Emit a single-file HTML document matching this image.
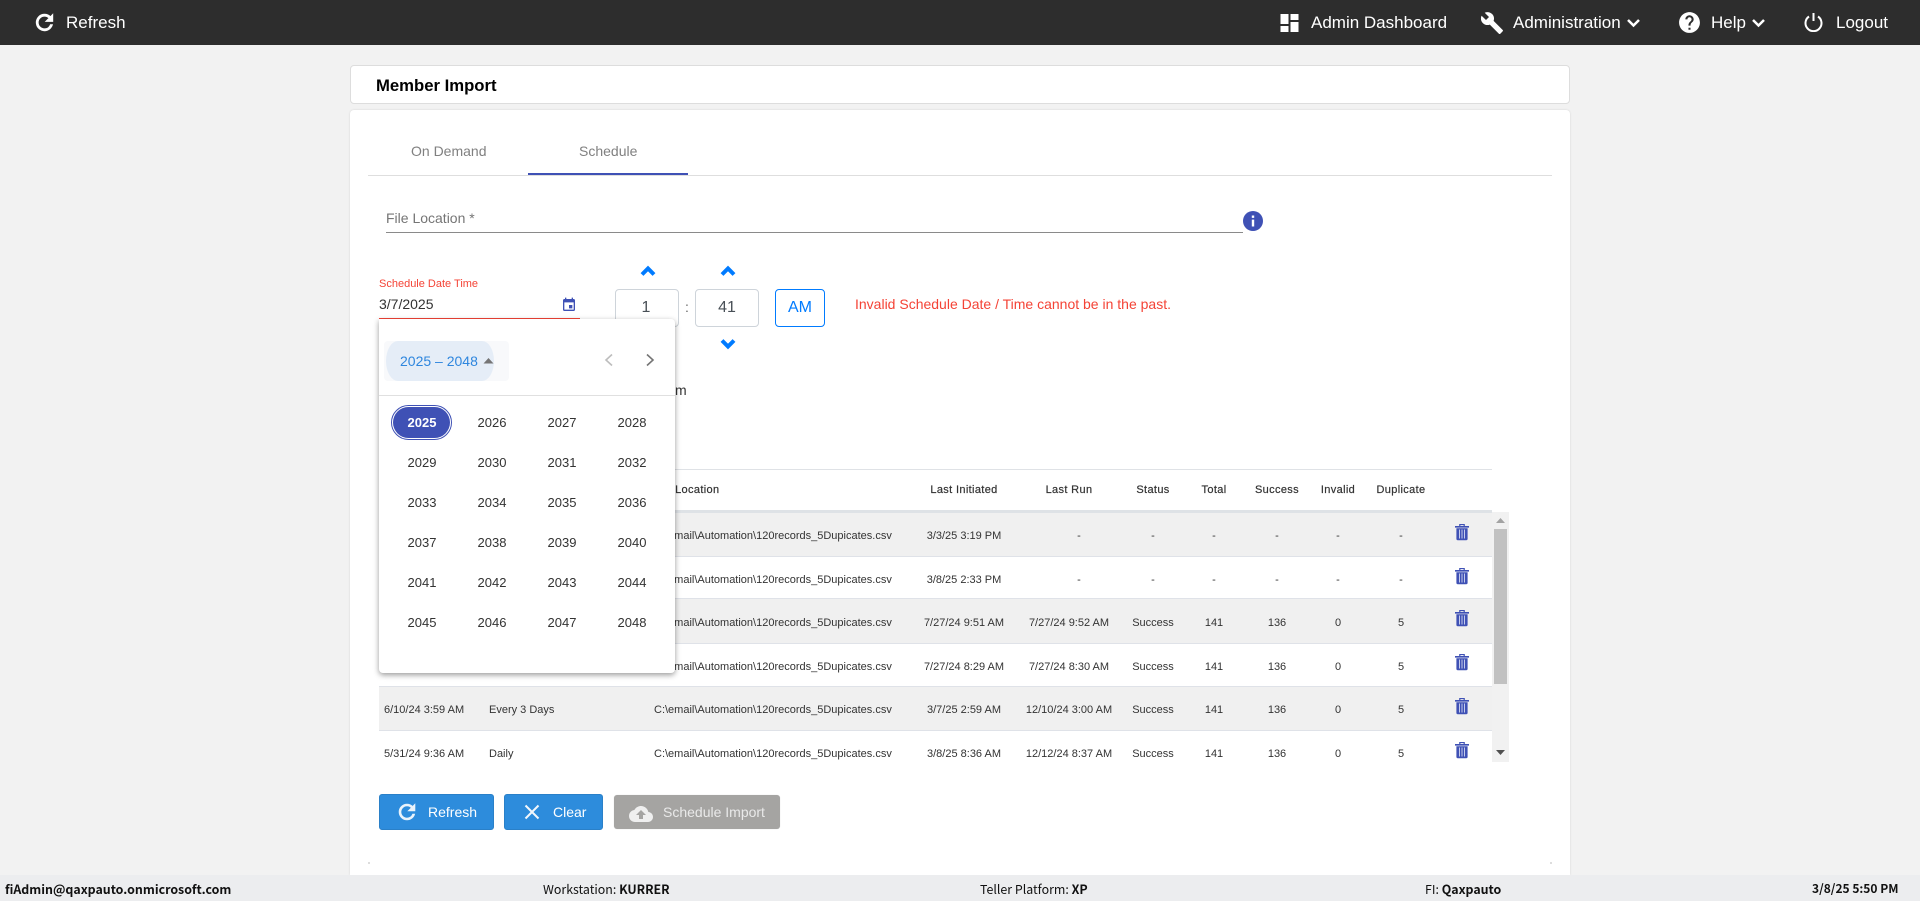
<!DOCTYPE html>
<html>
<head>
<meta charset="utf-8">
<title>Member Import</title>
<style>
html,body{margin:0;padding:0;width:1920px;height:901px;overflow:hidden;background:#f2f2f2;font-family:"Liberation Sans",Arial,sans-serif;color:#333}
div,span,svg{position:absolute;display:block;box-sizing:border-box}
b,i{position:static;display:inline}
.nav{color:#fff;font-size:17px;line-height:20px;top:13px;white-space:nowrap}
.bg{left:379px;width:1113px;background:#f0f0f0}
.ln{left:379px;width:1113px;height:1px;background:#dfe2e8}
.c{font-size:11px;line-height:16px;height:16px;white-space:nowrap;color:#333;transform:translateX(-50%)}
.l{font-size:11px;line-height:16px;height:16px;white-space:nowrap;color:#333}
.h{top:482px;font-size:11px;line-height:16px;height:16px;white-space:nowrap;color:#333;letter-spacing:.35px;-webkit-text-stroke:.2px #333;transform:translateX(-50%)}
.y{font-size:13px;line-height:16px;height:16px;width:60px;text-align:center;color:#333}
.tr{width:16px;height:18px}
.btn{border-radius:3px;color:#fff;font-size:14px;line-height:36px;white-space:nowrap}
.foot{top:880px;font-family:"Noto Sans CJK JP","Liberation Sans",sans-serif;font-size:12.4px;line-height:18px;color:#111;white-space:nowrap}
</style>
</head>
<body>
<div style="left:0;top:0;width:1920px;height:45px;background:#2d2d2d"></div>

<svg style="left:32px;top:10px" width="25" height="25" viewBox="0 0 24 24"><path fill="#fff" stroke="#fff" stroke-width=".7" d="M17.65 6.35C16.2 4.9 14.21 4 12 4c-4.42 0-7.99 3.58-7.99 8s3.57 8 7.99 8c3.73 0 6.84-2.55 7.73-6h-2.08c-.82 2.33-3.04 4-5.65 4-3.31 0-6-2.69-6-6s2.69-6 6-6c1.66 0 3.14.69 4.22 1.78L13 11h7V4l-2.35 2.35z"/></svg>
<div class="nav" style="left:66px">Refresh</div>

<svg style="left:1277px;top:11px" width="25" height="24" viewBox="0 0 24 24"><path fill="#fff" d="M3 13h8V3H3v10zm0 8h8v-6H3v6zm10 0h8V11h-8v10zm0-18v6h8V3h-8z"/></svg>
<div class="nav" style="left:1311px">Admin Dashboard</div>
<svg style="left:1480px;top:11px" width="24" height="24" viewBox="0 0 24 24"><path fill="#fff" d="M22.7 19l-9.1-9.1c.9-2.3.4-5-1.5-6.9-2-2-5-2.4-7.4-1.3L9 6 6 9 1.6 4.7C.4 7.1.9 10.1 2.9 12.1c1.9 1.9 4.6 2.4 6.9 1.5l9.1 9.1c.4.4 1 .4 1.4 0l2.3-2.3c.5-.4.5-1.1.1-1.4z"/></svg>
<div class="nav" style="left:1513px">Administration</div>
<svg style="left:1627px;top:18px" width="13" height="10" viewBox="0 0 13 10"><path fill="none" stroke="#fff" stroke-width="2.5" d="M1 2l5.5 5.5L12 2"/></svg>
<svg style="left:1677px;top:10px" width="25" height="25" viewBox="0 0 24 24"><path fill="#fff" d="M12 2C6.48 2 2 6.48 2 12s4.48 10 10 10 10-4.48 10-10S17.52 2 12 2zm1 17h-2v-2h2v2zm2.07-7.75l-.9.92C13.45 12.9 13 13.5 13 15h-2v-.5c0-1.1.45-2.1 1.17-2.83l1.24-1.26c.37-.36.59-.86.59-1.41 0-1.1-.9-2-2-2s-2 .9-2 2H8c0-2.21 1.79-4 4-4s4 1.79 4 4c0 .88-.36 1.68-.93 2.25z"/></svg>
<div class="nav" style="left:1711px">Help</div>
<svg style="left:1752px;top:18px" width="13" height="10" viewBox="0 0 13 10"><path fill="none" stroke="#fff" stroke-width="2.5" d="M1 2l5.5 5.5L12 2"/></svg>
<svg style="left:1803px;top:12px" width="21" height="20" viewBox="0 0 21 20"><path fill="none" stroke="#fff" stroke-width="2" d="M6 4.5A8 8 0 1 0 15 4.5M10.5 1v8"/></svg>
<div class="nav" style="left:1836px">Logout</div>

<div style="left:350px;top:65px;width:1220px;height:39px;background:#fff;border:1px solid #ddd;border-radius:4px"></div>
<div style="left:376px;top:76px;font-size:16.7px;line-height:20px;font-weight:bold;color:#000;white-space:nowrap">Member Import</div>

<div style="left:350px;top:110px;width:1220px;height:765px;background:#fff;border-radius:4px 4px 0 0;box-shadow:0 0 2px rgba(0,0,0,.12)"></div>
<div style="left:368px;top:862px;width:2px;height:2px;background:#ddd"></div>
<div style="left:1550px;top:862px;width:2px;height:2px;background:#ddd"></div>

<div style="left:368px;top:175px;width:1184px;height:1px;background:#dedede"></div>
<div style="left:528px;top:173px;width:160px;height:2px;background:#3f51b5"></div>
<div style="left:411px;top:143px;font-size:14px;line-height:16px;color:#808080;white-space:nowrap">On Demand</div>
<div style="left:579px;top:143px;font-size:14px;line-height:16px;color:#808080;white-space:nowrap">Schedule</div>

<div style="left:386px;top:210px;font-size:14px;line-height:16px;color:#757575;white-space:nowrap">File Location *</div>
<div style="left:386px;top:232px;width:857px;height:1px;background:#8a8a8a"></div>
<svg style="left:1243px;top:211px" width="20" height="20" viewBox="0 0 20 20"><circle cx="10" cy="10" r="10" fill="#3f51b5"/><path fill="#fff" d="M8.8 4.5h2.4v2.4H8.8zM8.8 8.6h2.4v6.9H8.8z"/></svg>

<div style="left:379px;top:277px;font-size:11px;line-height:14px;color:#f44336;white-space:nowrap">Schedule Date Time</div>
<div style="left:379px;top:296px;font-size:14px;line-height:16px;color:#333;white-space:nowrap">3/7/2025</div>
<svg style="left:561px;top:297px" width="16" height="16" viewBox="0 0 24 24"><path fill="#3f51b5" d="M17 12h-5v5h5v-5zM16 1v2H8V1H6v2H5c-1.11 0-1.99.9-1.99 2L3 19c0 1.1.89 2 2 2h14c1.1 0 2-.9 2-2V5c0-1.1-.9-2-2-2h-1V1h-2zm3 18H5V8h14v11z"/></svg>
<div style="left:379px;top:318px;width:201px;height:1px;background:#f44336"></div>

<svg style="left:640px;top:265px" width="16" height="12" viewBox="0 0 16 12"><path fill="none" stroke="#007bff" stroke-width="4" d="M2 9.5L8 3.5l6 6"/></svg>
<svg style="left:720px;top:265px" width="16" height="12" viewBox="0 0 16 12"><path fill="none" stroke="#007bff" stroke-width="4" d="M2 9.5L8 3.5l6 6"/></svg>
<svg style="left:720px;top:338px" width="16" height="12" viewBox="0 0 16 12"><path fill="none" stroke="#007bff" stroke-width="4" d="M2 2.5l6 6 6-6"/></svg>
<div style="left:615px;top:289px;width:64px;height:38px;border:1px solid #ced4da;border-radius:4px;padding-right:2px;text-align:center;font-size:16px;line-height:36px;color:#495057">1</div>
<div style="left:685px;top:298px;font-size:14px;line-height:18px;color:#666">:</div>
<div style="left:695px;top:289px;width:64px;height:38px;border:1px solid #ced4da;border-radius:4px;text-align:center;font-size:16px;line-height:36px;color:#495057">41</div>
<div style="left:775px;top:289px;width:50px;height:38px;border:1px solid #007bff;border-radius:4px;text-align:center;font-size:16px;line-height:36px;color:#007bff">AM</div>
<div style="left:855px;top:296px;font-size:14px;line-height:16px;color:#f44336;white-space:nowrap">Invalid Schedule Date / Time cannot be in the past.</div>

<div style="left:675px;top:381px;font-size:14px;line-height:18px;color:#333;white-space:nowrap">m</div>

<div style="left:379px;top:469px;width:1113px;height:1px;background:#dfe2e6"></div>
<div class="h" style="left:686px">File Location</div>
<div class="h" style="left:964px">Last Initiated</div>
<div class="h" style="left:1069px">Last Run</div>
<div class="h" style="left:1153px">Status</div>
<div class="h" style="left:1214px">Total</div>
<div class="h" style="left:1277px">Success</div>
<div class="h" style="left:1338px">Invalid</div>
<div class="h" style="left:1401px">Duplicate</div>
<div style="left:379px;top:510px;width:1113px;height:3px;background:#dee2e6"></div>

<div class="bg" style="top:513px;height:43px"></div>
<div class="ln" style="top:556px"></div>
<div class="ln" style="top:598px"></div>
<div class="bg" style="top:599px;height:44px"></div>
<div class="ln" style="top:643px"></div>
<div class="ln" style="top:686px"></div>
<div class="bg" style="top:687px;height:43px"></div>
<div class="ln" style="top:730px"></div>

<div class="l" style="left:654px;top:528px">C:\email\Automation\120records_5Dupicates.csv</div>
<div class="c" style="left:964px;top:528px">3/3/25 3:19 PM</div>
<div class="c" style="left:1079px;top:528px">-</div><div class="c" style="left:1153px;top:528px">-</div><div class="c" style="left:1214px;top:528px">-</div><div class="c" style="left:1277px;top:528px">-</div><div class="c" style="left:1338px;top:528px">-</div><div class="c" style="left:1401px;top:528px">-</div>

<div class="l" style="left:654px;top:572px">C:\email\Automation\120records_5Dupicates.csv</div>
<div class="c" style="left:964px;top:572px">3/8/25 2:33 PM</div>
<div class="c" style="left:1079px;top:572px">-</div><div class="c" style="left:1153px;top:572px">-</div><div class="c" style="left:1214px;top:572px">-</div><div class="c" style="left:1277px;top:572px">-</div><div class="c" style="left:1338px;top:572px">-</div><div class="c" style="left:1401px;top:572px">-</div>

<div class="l" style="left:654px;top:615px">C:\email\Automation\120records_5Dupicates.csv</div>
<div class="c" style="left:964px;top:615px">7/27/24 9:51 AM</div>
<div class="c" style="left:1069px;top:615px">7/27/24 9:52 AM</div><div class="c" style="left:1153px;top:615px">Success</div><div class="c" style="left:1214px;top:615px">141</div><div class="c" style="left:1277px;top:615px">136</div><div class="c" style="left:1338px;top:615px">0</div><div class="c" style="left:1401px;top:615px">5</div>

<div class="l" style="left:654px;top:659px">C:\email\Automation\120records_5Dupicates.csv</div>
<div class="c" style="left:964px;top:659px">7/27/24 8:29 AM</div>
<div class="c" style="left:1069px;top:659px">7/27/24 8:30 AM</div><div class="c" style="left:1153px;top:659px">Success</div><div class="c" style="left:1214px;top:659px">141</div><div class="c" style="left:1277px;top:659px">136</div><div class="c" style="left:1338px;top:659px">0</div><div class="c" style="left:1401px;top:659px">5</div>

<div class="l" style="left:384px;top:702px">6/10/24 3:59 AM</div><div class="l" style="left:489px;top:702px">Every 3 Days</div>
<div class="l" style="left:654px;top:702px">C:\email\Automation\120records_5Dupicates.csv</div>
<div class="c" style="left:964px;top:702px">3/7/25 2:59 AM</div>
<div class="c" style="left:1069px;top:702px">12/10/24 3:00 AM</div><div class="c" style="left:1153px;top:702px">Success</div><div class="c" style="left:1214px;top:702px">141</div><div class="c" style="left:1277px;top:702px">136</div><div class="c" style="left:1338px;top:702px">0</div><div class="c" style="left:1401px;top:702px">5</div>

<div class="l" style="left:384px;top:746px">5/31/24 9:36 AM</div><div class="l" style="left:489px;top:746px">Daily</div>
<div class="l" style="left:654px;top:746px">C:\email\Automation\120records_5Dupicates.csv</div>
<div class="c" style="left:964px;top:746px">3/8/25 8:36 AM</div>
<div class="c" style="left:1069px;top:746px">12/12/24 8:37 AM</div><div class="c" style="left:1153px;top:746px">Success</div><div class="c" style="left:1214px;top:746px">141</div><div class="c" style="left:1277px;top:746px">136</div><div class="c" style="left:1338px;top:746px">0</div><div class="c" style="left:1401px;top:746px">5</div>

<svg class="tr" style="left:1454px;top:523px" viewBox="0 0 16 18"><path fill="#3f51b5" d="M1 3h14v1.6H1zM5.2 1h5.6v2.4H9.6V2.1H6.4v1.3H5.2zM2.4 5.2h11.2V16a1.2 1.2 0 0 1-1.2 1.2H3.6A1.2 1.2 0 0 1 2.4 16z"/><path stroke="#c4cbec" stroke-width="1" d="M5.5 6.5v9M8 6.5v9M10.5 6.5v9"/></svg>
<svg class="tr" style="left:1454px;top:567px" viewBox="0 0 16 18"><path fill="#3f51b5" d="M1 3h14v1.6H1zM5.2 1h5.6v2.4H9.6V2.1H6.4v1.3H5.2zM2.4 5.2h11.2V16a1.2 1.2 0 0 1-1.2 1.2H3.6A1.2 1.2 0 0 1 2.4 16z"/><path stroke="#c4cbec" stroke-width="1" d="M5.5 6.5v9M8 6.5v9M10.5 6.5v9"/></svg>
<svg class="tr" style="left:1454px;top:609px" viewBox="0 0 16 18"><path fill="#3f51b5" d="M1 3h14v1.6H1zM5.2 1h5.6v2.4H9.6V2.1H6.4v1.3H5.2zM2.4 5.2h11.2V16a1.2 1.2 0 0 1-1.2 1.2H3.6A1.2 1.2 0 0 1 2.4 16z"/><path stroke="#c4cbec" stroke-width="1" d="M5.5 6.5v9M8 6.5v9M10.5 6.5v9"/></svg>
<svg class="tr" style="left:1454px;top:653px" viewBox="0 0 16 18"><path fill="#3f51b5" d="M1 3h14v1.6H1zM5.2 1h5.6v2.4H9.6V2.1H6.4v1.3H5.2zM2.4 5.2h11.2V16a1.2 1.2 0 0 1-1.2 1.2H3.6A1.2 1.2 0 0 1 2.4 16z"/><path stroke="#c4cbec" stroke-width="1" d="M5.5 6.5v9M8 6.5v9M10.5 6.5v9"/></svg>
<svg class="tr" style="left:1454px;top:697px" viewBox="0 0 16 18"><path fill="#3f51b5" d="M1 3h14v1.6H1zM5.2 1h5.6v2.4H9.6V2.1H6.4v1.3H5.2zM2.4 5.2h11.2V16a1.2 1.2 0 0 1-1.2 1.2H3.6A1.2 1.2 0 0 1 2.4 16z"/><path stroke="#c4cbec" stroke-width="1" d="M5.5 6.5v9M8 6.5v9M10.5 6.5v9"/></svg>
<svg class="tr" style="left:1454px;top:741px" viewBox="0 0 16 18"><path fill="#3f51b5" d="M1 3h14v1.6H1zM5.2 1h5.6v2.4H9.6V2.1H6.4v1.3H5.2zM2.4 5.2h11.2V16a1.2 1.2 0 0 1-1.2 1.2H3.6A1.2 1.2 0 0 1 2.4 16z"/><path stroke="#c4cbec" stroke-width="1" d="M5.5 6.5v9M8 6.5v9M10.5 6.5v9"/></svg>

<div style="left:1492px;top:512px;width:17px;height:250px;background:#f1f1f1"></div>
<div style="left:1494px;top:529px;width:13px;height:155px;background:#c1c1c1"></div>
<svg style="left:1495px;top:518px" width="11" height="6" viewBox="0 0 11 6"><path fill="#a3a3a3" d="M5.5 0L10 5H1z"/></svg>
<svg style="left:1495px;top:750px" width="11" height="6" viewBox="0 0 11 6"><path fill="#505050" d="M1 0h9L5.5 5z"/></svg>

<div class="btn" style="left:379px;top:794px;width:115px;height:36px;background:#2d8cdc;border:1px solid #2a80c8"></div>
<svg style="left:395px;top:800px" width="24" height="24" viewBox="0 0 24 24"><path fill="#eaf3fb" stroke="#eaf3fb" stroke-width=".6" d="M17.65 6.35C16.2 4.9 14.21 4 12 4c-4.42 0-7.99 3.58-7.99 8s3.57 8 7.99 8c3.73 0 6.84-2.55 7.73-6h-2.08c-.82 2.33-3.04 4-5.65 4-3.31 0-6-2.69-6-6s2.69-6 6-6c1.66 0 3.14.69 4.22 1.78L13 11h7V4l-2.35 2.35z"/></svg>
<div class="btn" style="left:428px;top:794px">Refresh</div>
<div class="btn" style="left:504px;top:794px;width:99px;height:36px;background:#2d8cdc;border:1px solid #2a80c8"></div>
<svg style="left:524px;top:804px" width="16" height="16" viewBox="0 0 16 16"><path fill="none" stroke="#f2f7fc" stroke-width="2" d="M1.5 1.5l13 13M14.5 1.5l-13 13"/></svg>
<div class="btn" style="left:553px;top:794px">Clear</div>
<div class="btn" style="left:614px;top:795px;width:166px;height:34px;background:#a5a4a2;box-shadow:0 0 1px rgba(0,0,0,.15)"></div>
<svg style="left:629px;top:802px" width="24" height="24" viewBox="0 0 24 24"><path fill="#efefef" d="M19.35 10.04C18.67 6.59 15.64 4 12 4 9.11 4 6.6 5.64 5.35 8.04 2.34 8.36 0 10.91 0 14c0 3.31 2.69 6 6 6h13c2.76 0 5-2.24 5-5 0-2.64-2.05-4.78-4.65-4.96zM14 13v4h-4v-4H7l5-5 5 5h-3z"/></svg>
<div class="btn" style="left:663px;top:794px;color:#e9e9e9">Schedule Import</div>

<div style="left:379px;top:319px;width:296px;height:354px;background:#fff;border-radius:0 4px 4px 4px;box-shadow:0 2px 6px rgba(0,0,0,.4)"></div>
<div style="left:384px;top:341px;width:125px;height:40px;background:#f8f9fb;border-radius:4px"></div>
<div style="left:386px;top:341px;width:108px;height:40px;background:#e5edf7;border-radius:12px / 20px"></div>
<div style="left:400px;top:353px;font-size:14px;line-height:16px;color:#2e86de;white-space:nowrap">2025 – 2048</div>
<svg style="left:483px;top:358px" width="11" height="6" viewBox="0 0 11 6"><path fill="#757575" d="M5.5 0L10.5 5.5H.5z"/></svg>
<svg style="left:603px;top:353px" width="12" height="14" viewBox="0 0 12 14"><path fill="none" stroke="#bdbdbd" stroke-width="1.6" d="M9 1.5L3 7l6 5.5"/></svg>
<svg style="left:644px;top:353px" width="12" height="14" viewBox="0 0 12 14"><path fill="none" stroke="#757575" stroke-width="1.6" d="M3 1.5L9 7l-6 5.5"/></svg>
<div style="left:379px;top:395px;width:296px;height:1px;background:#e0e0e0"></div>

<div style="left:391px;top:405px;width:61px;height:35px;border:1px solid #3f51b5;border-radius:18px"></div>
<div style="left:393px;top:407px;width:57px;height:31px;background:#3f51b5;border-radius:16px"></div>
<div class="y" style="left:392px;top:415px;color:#fff;font-weight:bold">2025</div><div class="y" style="left:462px;top:415px">2026</div><div class="y" style="left:532px;top:415px">2027</div><div class="y" style="left:602px;top:415px">2028</div>
<div class="y" style="left:392px;top:455px">2029</div><div class="y" style="left:462px;top:455px">2030</div><div class="y" style="left:532px;top:455px">2031</div><div class="y" style="left:602px;top:455px">2032</div>
<div class="y" style="left:392px;top:495px">2033</div><div class="y" style="left:462px;top:495px">2034</div><div class="y" style="left:532px;top:495px">2035</div><div class="y" style="left:602px;top:495px">2036</div>
<div class="y" style="left:392px;top:535px">2037</div><div class="y" style="left:462px;top:535px">2038</div><div class="y" style="left:532px;top:535px">2039</div><div class="y" style="left:602px;top:535px">2040</div>
<div class="y" style="left:392px;top:575px">2041</div><div class="y" style="left:462px;top:575px">2042</div><div class="y" style="left:532px;top:575px">2043</div><div class="y" style="left:602px;top:575px">2044</div>
<div class="y" style="left:392px;top:615px">2045</div><div class="y" style="left:462px;top:615px">2046</div><div class="y" style="left:532px;top:615px">2047</div><div class="y" style="left:602px;top:615px">2048</div>

<div style="left:0;top:875px;width:1920px;height:26px;background:#ecedef"></div>
<div class="foot" style="left:5px;font-weight:bold">fiAdmin@qaxpauto.onmicrosoft.com</div>
<div class="foot" style="left:543px">Workstation: <b>KURRER</b></div>
<div class="foot" style="left:980px">Teller Platform: <b>XP</b></div>
<div class="foot" style="left:1425px">FI: <b>Qaxpauto</b></div>
<div class="foot" style="left:1812px;font-weight:bold;font-size:12px">3/8/25 5:50 PM</div>
</body>
</html>
